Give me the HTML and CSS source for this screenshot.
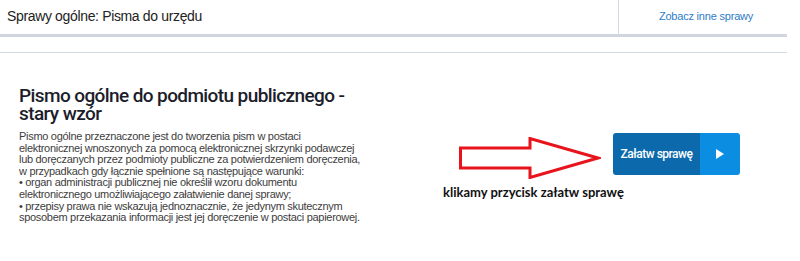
FILE: index.html
```html
<!DOCTYPE html>
<html lang="pl">
<head>
    <meta charset="UTF-8">
    <title>Sprawy ogólne: Pisma do urzędu</title>
    <link rel="stylesheet" href="styles.css">
</head>
<body>
<div class="strona">
    <div class="naglowek">
        <div class="naglowek_tytul">Sprawy ogólne: Pisma do urzędu</div>
        <div class="naglowek_link"><a href="#">Zobacz inne sprawy</a></div>
    </div>
    <div class="pasek"></div>
    <div class="tresc">
        <div class="opis">
            <h1>Pismo ogólne do podmiotu publicznego - stary wzór</h1>
            <p>Pismo ogólne przeznaczone jest do tworzenia pism w postaci<br>
            elektronicznej wnoszonych za pomocą elektronicznej skrzynki podawczej<br>
            lub doręczanych przez podmioty publiczne za potwierdzeniem doręczenia,<br>
            w przypadkach gdy łącznie spełnione są następujące warunki:<br>
            • organ administracji publicznej nie określił wzoru dokumentu<br>
            elektronicznego umożliwiającego załatwienie danej sprawy;<br>
            • przepisy prawa nie wskazują jednoznacznie, że jedynym skutecznym<br>
            sposobem przekazania informacji jest jej doręczenie w postaci papierowej.</p>
        </div>
        <div class="akcja">
            <a href="#" class="przycisk">
                <span class="przycisk_tekst">Załatw sprawę</span>
                <span class="przycisk_ikona">
                    <svg width="8" height="10" viewBox="0 0 8 10"><polygon points="0,0 8,5 0,10" fill="#fff"/></svg>
                </span>
            </a>
        </div>
        <!-- adnotacja na zrzucie -->
        <svg class="strzalka" width="142" height="42" viewBox="0 0 142 42">
            <polygon points="1.5,11 71,11 71,1.5 139,21 71,40.5 71,31 1.5,31" fill="#fff" stroke="#e8141c" stroke-width="3" stroke-linejoin="miter"/>
        </svg>
        <div class="podpis">klikamy przycisk załatw sprawę</div>
    </div>
</div>
</body>
</html>
```

FILE: styles.css
```css
body {
    margin: 0;
    font-family: Arial, "Liberation Sans", sans-serif;
    background: #fff;
}
.strona {
    width: 787px;
}
.naglowek {
    display: flex;
    height: 34px;
    border-bottom: 3px solid #cfd6e0;
}
.naglowek_tytul {
    flex: 1;
    padding: 8px 0 0 7px;
    font-size: 14px;
    line-height: 16px;
    letter-spacing: -0.35px;
    color: #222;
}
.naglowek_link {
    width: 162px;
    border-left: 1px solid #d3d9e2;
    text-align: center;
    padding: 9px 0 0 6px;
    font-size: 11px;
    line-height: 14px;
    letter-spacing: -0.2px;
}
.naglowek_link a {
    color: #2d7cc6;
    text-decoration: none;
}
.pasek {
    height: 15px;
    border-bottom: 1px solid #d3d9e2;
}
.tresc {
    position: relative;
    display: flex;
    justify-content: space-between;
    height: 208px;
}
.opis {
    padding: 34px 0 0 19px;
}
.opis h1 {
    margin: 0 0 8px 0;
    width: 345px;
    font-family: Roboto, sans-serif;
    font-weight: 500;
    font-size: 19px;
    letter-spacing: -0.6px;
    line-height: 18px;
    color: #1c1d2b;
}
.opis p {
    margin: 0;
    font-size: 11px;
    line-height: 11.6px;
    letter-spacing: -0.3px;
    color: #3d3d3d;
}
.akcja {
    padding: 80px 47px 0 0;
}
.przycisk {
    display: flex;
    height: 42px;
    border-radius: 3px;
    overflow: hidden;
    text-decoration: none;
}
.przycisk_tekst {
    width: 87px;
    background: #0c69ab;
    color: #fff;
    font-family: Roboto, sans-serif;
    font-weight: 500;
    font-size: 12px;
    letter-spacing: -0.5px;
    line-height: 42px;
    text-align: center;
}
.przycisk_ikona {
    width: 40px;
    background: #0b8de2;
    display: flex;
    align-items: center;
    justify-content: center;
}
.strzalka {
    position: absolute;
    left: 459px;
    top: 84px;
}
.podpis {
    position: absolute;
    left: 443px;
    top: 131px;
    font-family: Lato, sans-serif;
    font-weight: 700;
    font-size: 13px;
    color: #111;
}
```
